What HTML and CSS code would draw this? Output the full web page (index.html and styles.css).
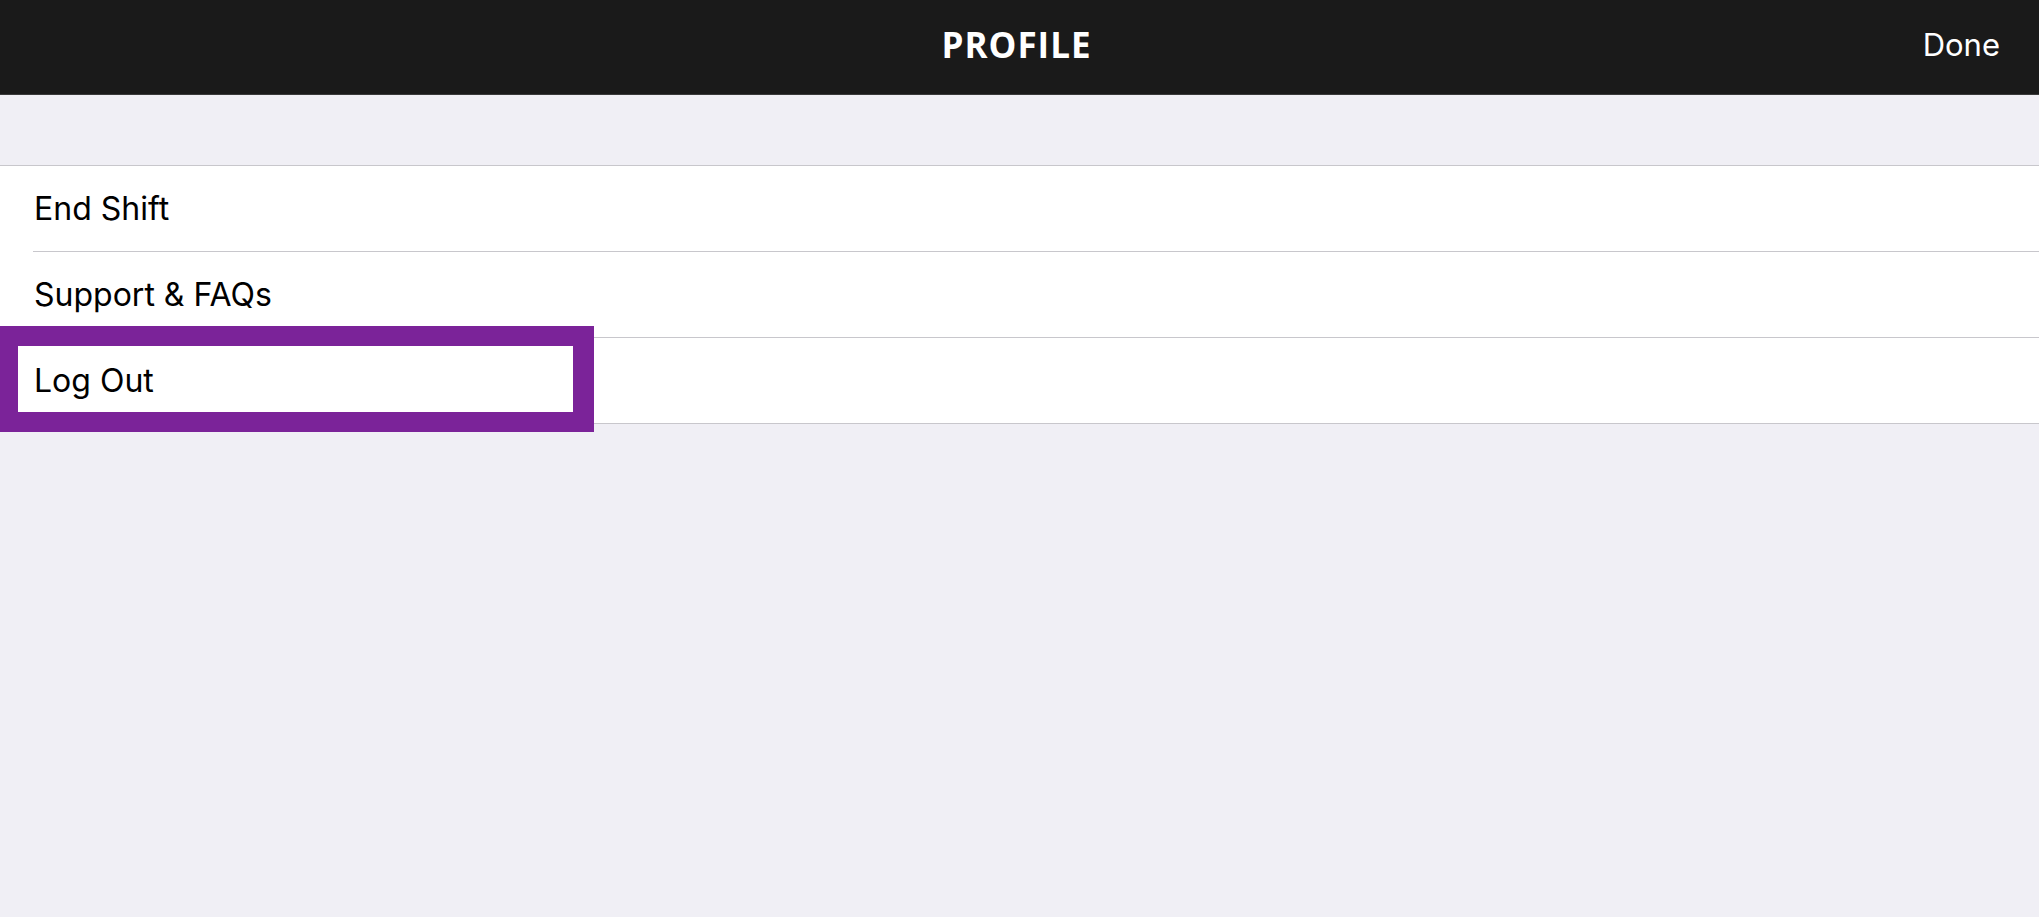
FILE: index.html
```html
<!DOCTYPE html>
<html lang="en">
<head>
  <meta charset="UTF-8">
  <meta name="viewport" content="width=device-width, initial-scale=1.0">
  <title>Profile</title>
  <link rel="stylesheet" href="styles.css">
</head>
<body>

  <header class="nav-bar">
    <h1 class="nav-title">PROFILE</h1>
    <button class="nav-done">Done</button>
  </header>

  <main class="content">
    <ul class="menu">
      <li class="menu-item">End Shift</li>
      <li class="menu-item">Support &amp; FAQs</li>
      <li class="menu-item menu-item-last">
        Log Out
        <span class="highlight-box"></span>
      </li>
    </ul>
  </main>

</body>
</html>
```

FILE: styles.css
```css
html, body {
  height: 100%;
}

body {
  margin: 0;
  background-color: #f0eff5;
  font-family: Inter, 'Liberation Sans', sans-serif;
  color: #000;
  display: flex;
  flex-direction: column;
}

.nav-bar {
  position: relative;
  flex: 0 0 95px;
  height: 95px;
  padding-bottom: 6px;
  background-color: #1a1a1a;
  border-bottom: 1px solid #3a3a3a;
  box-sizing: border-box;
  display: flex;
  align-items: center;
  justify-content: center;
}

.nav-title {
  margin: 0 0 0 -6px;
  font-family: 'Open Sans', sans-serif;
  font-weight: 700;
  font-size: 35px;
  letter-spacing: 1px;
  color: #fff;
}

.nav-done {
  position: absolute;
  right: 39px;
  top: 0;
  height: 89px;
  padding: 0;
  background: none;
  border: none;
  color: #fff;
  font-family: Inter, 'Liberation Sans', sans-serif;
  font-size: 31px;
  cursor: pointer;
}

.content {
  flex: 1;
  padding-top: 70px;
}

.menu {
  list-style: none;
  margin: 0;
  padding: 0 0 0 33px;
  background-color: #fff;
  border-top: 1px solid #c8c7cc;
  border-bottom: 1px solid #c8c7cc;
}

.menu-item {
  position: relative;
  height: 85px;
  display: flex;
  align-items: center;
  padding-left: 1px;
  font-size: 32px;
  border-bottom: 1px solid #c8c7cc;
}

.menu-item-last {
  border-bottom: none;
}

.highlight-box {
  position: absolute;
  left: -33px;
  top: -12px;
  bottom: -9px;
  width: 594px;
  box-sizing: border-box;
  border: 20px solid #7b2399;
  border-left-width: 18px;
  border-right-width: 21px;
}
```
